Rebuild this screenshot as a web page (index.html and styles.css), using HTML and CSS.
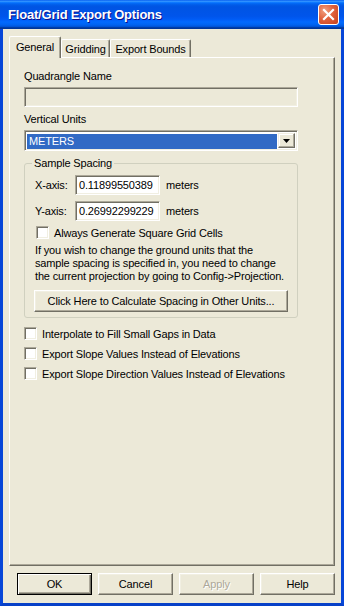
FILE: index.html
```html
<!DOCTYPE html>
<html lang="en">
<head>
    <meta charset="UTF-8">
    <title>Float/Grid Export Options</title>
    <link rel="stylesheet" href="styles.css">
</head>
<body>
    <div class="window">
        <div class="titlebar">
            <span class="title">Float/Grid Export Options</span>
            <span class="close-btn">
                <svg width="13" height="13" viewBox="0 0 13 13">
                    <path d="M2 2 L11 11 M11 2 L2 11" stroke="#fff" stroke-width="2.2" stroke-linecap="square"/>
                </svg>
            </span>
        </div>

        <div class="client">
            <div class="tabs">
                <div class="tab active">General</div>
                <div class="tab grid">Gridding</div>
                <div class="tab bounds">Export Bounds</div>
            </div>

            <div class="panel">
                <div class="label">Quadrangle Name</div>
                <div class="textbox disabled"></div>

                <div class="label second">Vertical Units</div>
                <div class="combo">
                    <span class="combo-value">METERS</span>
                    <span class="combo-btn">
                        <svg width="7" height="4" viewBox="0 0 7 4"><path d="M0 0 H7 L3.5 4 Z" fill="#000"/></svg>
                    </span>
                </div>

                <fieldset class="group">
                    <legend>Sample Spacing</legend>
                    <div class="axis-row">
                        <span class="axis-label">X-axis:</span>
                        <span class="textbox num">0.11899550389</span>
                        <span class="unit">meters</span>
                    </div>
                    <div class="axis-row">
                        <span class="axis-label">Y-axis:</span>
                        <span class="textbox num">0.26992299229</span>
                        <span class="unit">meters</span>
                    </div>
                    <div class="check-row inner">
                        <span class="checkbox"></span>
                        <span>Always Generate Square Grid Cells</span>
                    </div>
                    <p class="note">
                        If you wish to change the ground units that the<br>
                        sample spacing is specified in, you need to change<br>
                        the current projection by going to Config-&gt;Projection.
                    </p>
                    <div class="button wide">Click Here to Calculate Spacing in Other Units...</div>
                </fieldset>

                <div class="check-row first">
                    <span class="checkbox"></span>
                    <span>Interpolate to Fill Small Gaps in Data</span>
                </div>
                <div class="check-row">
                    <span class="checkbox"></span>
                    <span>Export Slope Values Instead of Elevations</span>
                </div>
                <div class="check-row">
                    <span class="checkbox"></span>
                    <span>Export Slope Direction Values Instead of Elevations</span>
                </div>
            </div>

            <div class="buttons">
                <div class="button default">OK</div>
                <div class="button">Cancel</div>
                <div class="button disabled">Apply</div>
                <div class="button">Help</div>
            </div>
        </div>
    </div>
</body>
</html>
```

FILE: styles.css
```css
/* Fenetre facon Windows XP */
body {
    margin: 0;
    padding: 0;
    font-family: "Liberation Sans", Arial, sans-serif;
    font-size: 11px;
    letter-spacing: -0.15px;
    color: #000;
    background-color: #0055e5;
}

.window {
    width: 344px;
    height: 606px;
    display: flex;
    flex-direction: column;
    box-sizing: border-box;
    border-left: 3px solid #0746d8;
    border-right: 3px solid #0746d8;
    border-bottom: 3px solid #0740c8;
    background-color: #0055e5;
}

.titlebar {
    height: 29px;
    margin: 0 -3px;
    padding: 0 5px 0 8px;
    display: flex;
    align-items: center;
    justify-content: space-between;
    background: linear-gradient(to bottom, #0058ee 0%, #3593ff 4%, #288eff 6%, #127dff 8%, #036ffc 10%, #0262ee 14%, #0057e5 20%, #0054e3 24%, #0055eb 56%, #005bf5 66%, #026afe 76%, #0062ef 86%, #0052d6 92%, #0040ab 94%, #003092 100%);
}

.title {
    color: white;
    font-weight: bold;
    font-size: 13px;
    text-shadow: 1px 1px #0f1089;
    letter-spacing: -0.2px;
}

.close-btn {
    width: 21px;
    height: 21px;
    box-sizing: border-box;
    border: 1px solid #fff;
    border-radius: 3px;
    background: radial-gradient(circle at 30% 30%, #f0a080 0%, #e1623d 45%, #c4401c 100%);
    display: flex;
    align-items: center;
    justify-content: center;
    margin-top: -1px;
}

.client {
    flex: 1;
    background-color: #ece9d8;
    padding: 7px 6px 8px 6px;
    display: flex;
    flex-direction: column;
}

/* Onglets */
.tabs {
    display: flex;
    align-items: flex-end;
    margin-bottom: -1px;
}

.tab {
    height: 18px;
    line-height: 18px;
    box-sizing: border-box;
    text-align: center;
    border-top: 1px solid #fff;
    border-left: 1px solid #fff;
    border-right: 1px solid #716f64;
    box-shadow: inset -1px 0 #aca899;
    border-radius: 2px 2px 0 0;
    margin-bottom: 1px;
    background-color: #ece9d8;
}

.tab.active {
    width: 52px;
    height: 22px;
    line-height: 20px;
    margin-bottom: 0;
    position: relative;
    z-index: 1;
}

.tab.grid {
    width: 49px;
}

.tab.bounds {
    width: 81px;
}

.panel {
    flex: 1;
    box-sizing: border-box;
    border-top: 1px solid #fff;
    border-left: 1px solid #fff;
    border-right: 1px solid #716f64;
    border-bottom: 1px solid #716f64;
    box-shadow: inset -1px -1px #aca899;
    padding: 12px 0 0 14px;
}

.label {
    line-height: 13px;
}

.label.second {
    margin-top: 6px;
}

/* Champs creux */
.textbox {
    display: block;
    box-sizing: border-box;
    border: 1px solid;
    border-color: #aca899 #fff #fff #aca899;
    box-shadow: inset 1px 1px #716f64, inset -1px -1px #f1efe2;
    background-color: #fff;
}

.textbox.disabled {
    width: 274px;
    height: 20px;
    margin-top: 4px;
    background-color: #ece9d8;
}

.combo {
    width: 274px;
    height: 21px;
    margin-top: 4px;
    box-sizing: border-box;
    display: flex;
    padding: 2px;
    border: 1px solid;
    border-color: #aca899 #fff #fff #aca899;
    box-shadow: inset 1px 1px #716f64, inset -1px -1px #f1efe2;
    background-color: #fff;
}

.combo-value {
    flex: 1;
    background-color: #316ac5;
    color: #fff;
    line-height: 15px;
    padding-left: 2px;
    margin: 1px 1px 0 0;
    height: 15px;
}

.combo-btn {
    width: 17px;
    box-sizing: border-box;
    border: 1px solid;
    border-color: #f1efe2 #716f64 #716f64 #f1efe2;
    box-shadow: inset -1px -1px #aca899, inset 1px 1px #fff;
    background-color: #ece9d8;
    display: flex;
    align-items: center;
    justify-content: center;
}

/* Cadre Sample Spacing */
.group {
    width: 274px;
    box-sizing: border-box;
    margin: 6px 0 0 0;
    padding: 0 9px 5px 10px;
    border: 1px solid #d0d0bf;
    border-radius: 3px;
}

.group legend {
    padding: 0 2px;
    margin-left: -3px;
    line-height: 13px;
}

.axis-row {
    display: flex;
    align-items: center;
    height: 20px;
    margin-top: 5px;
}

.axis-row + .axis-row {
    margin-top: 6px;
}

.axis-label {
    width: 40px;
}

.textbox.num {
    width: 85px;
    height: 20px;
    line-height: 18px;
    padding-left: 3px;
}

.unit {
    margin-left: 6px;
}

.check-row {
    display: flex;
    align-items: center;
    height: 13px;
    margin-top: 6px;
    white-space: nowrap;
}

.check-row.inner {
    margin-top: 5px;
    margin-left: 1px;
}

.check-row.first {
    margin-top: 9px;
}

.check-row + .check-row {
    margin-top: 7px;
}

.checkbox {
    width: 13px;
    height: 13px;
    box-sizing: border-box;
    border: 1px solid;
    border-color: #aca899 #fff #fff #aca899;
    box-shadow: inset 1px 1px #716f64, inset -1px -1px #f1efe2;
    background-color: #fff;
    margin-right: 5px;
    flex-shrink: 0;
}

.note {
    margin: 5px 0 0 0;
    line-height: 13px;
    font-size: 11px;
    white-space: nowrap;
}

/* Boutons en relief */
.button {
    box-sizing: border-box;
    height: 22px;
    line-height: 20px;
    text-align: center;
    border: 1px solid;
    border-color: #fff #716f64 #716f64 #fff;
    box-shadow: inset -1px -1px #aca899, inset 1px 1px #f1efe2;
    background-color: #ece9d8;
}

.button.wide {
    width: 254px;
    margin: 7px 0 0 -1px;
}

.buttons {
    display: flex;
    gap: 6px;
    margin: 7px 0 0 8px;
}

.buttons .button {
    width: 75px;
}

.button.default {
    border: 1px solid #000;
    box-shadow: inset 1px 1px #fff, inset -1px -1px #716f64, inset -2px -2px #aca899;
}

.button.disabled {
    color: #aca899;
    text-shadow: 1px 1px #fff;
}
```
